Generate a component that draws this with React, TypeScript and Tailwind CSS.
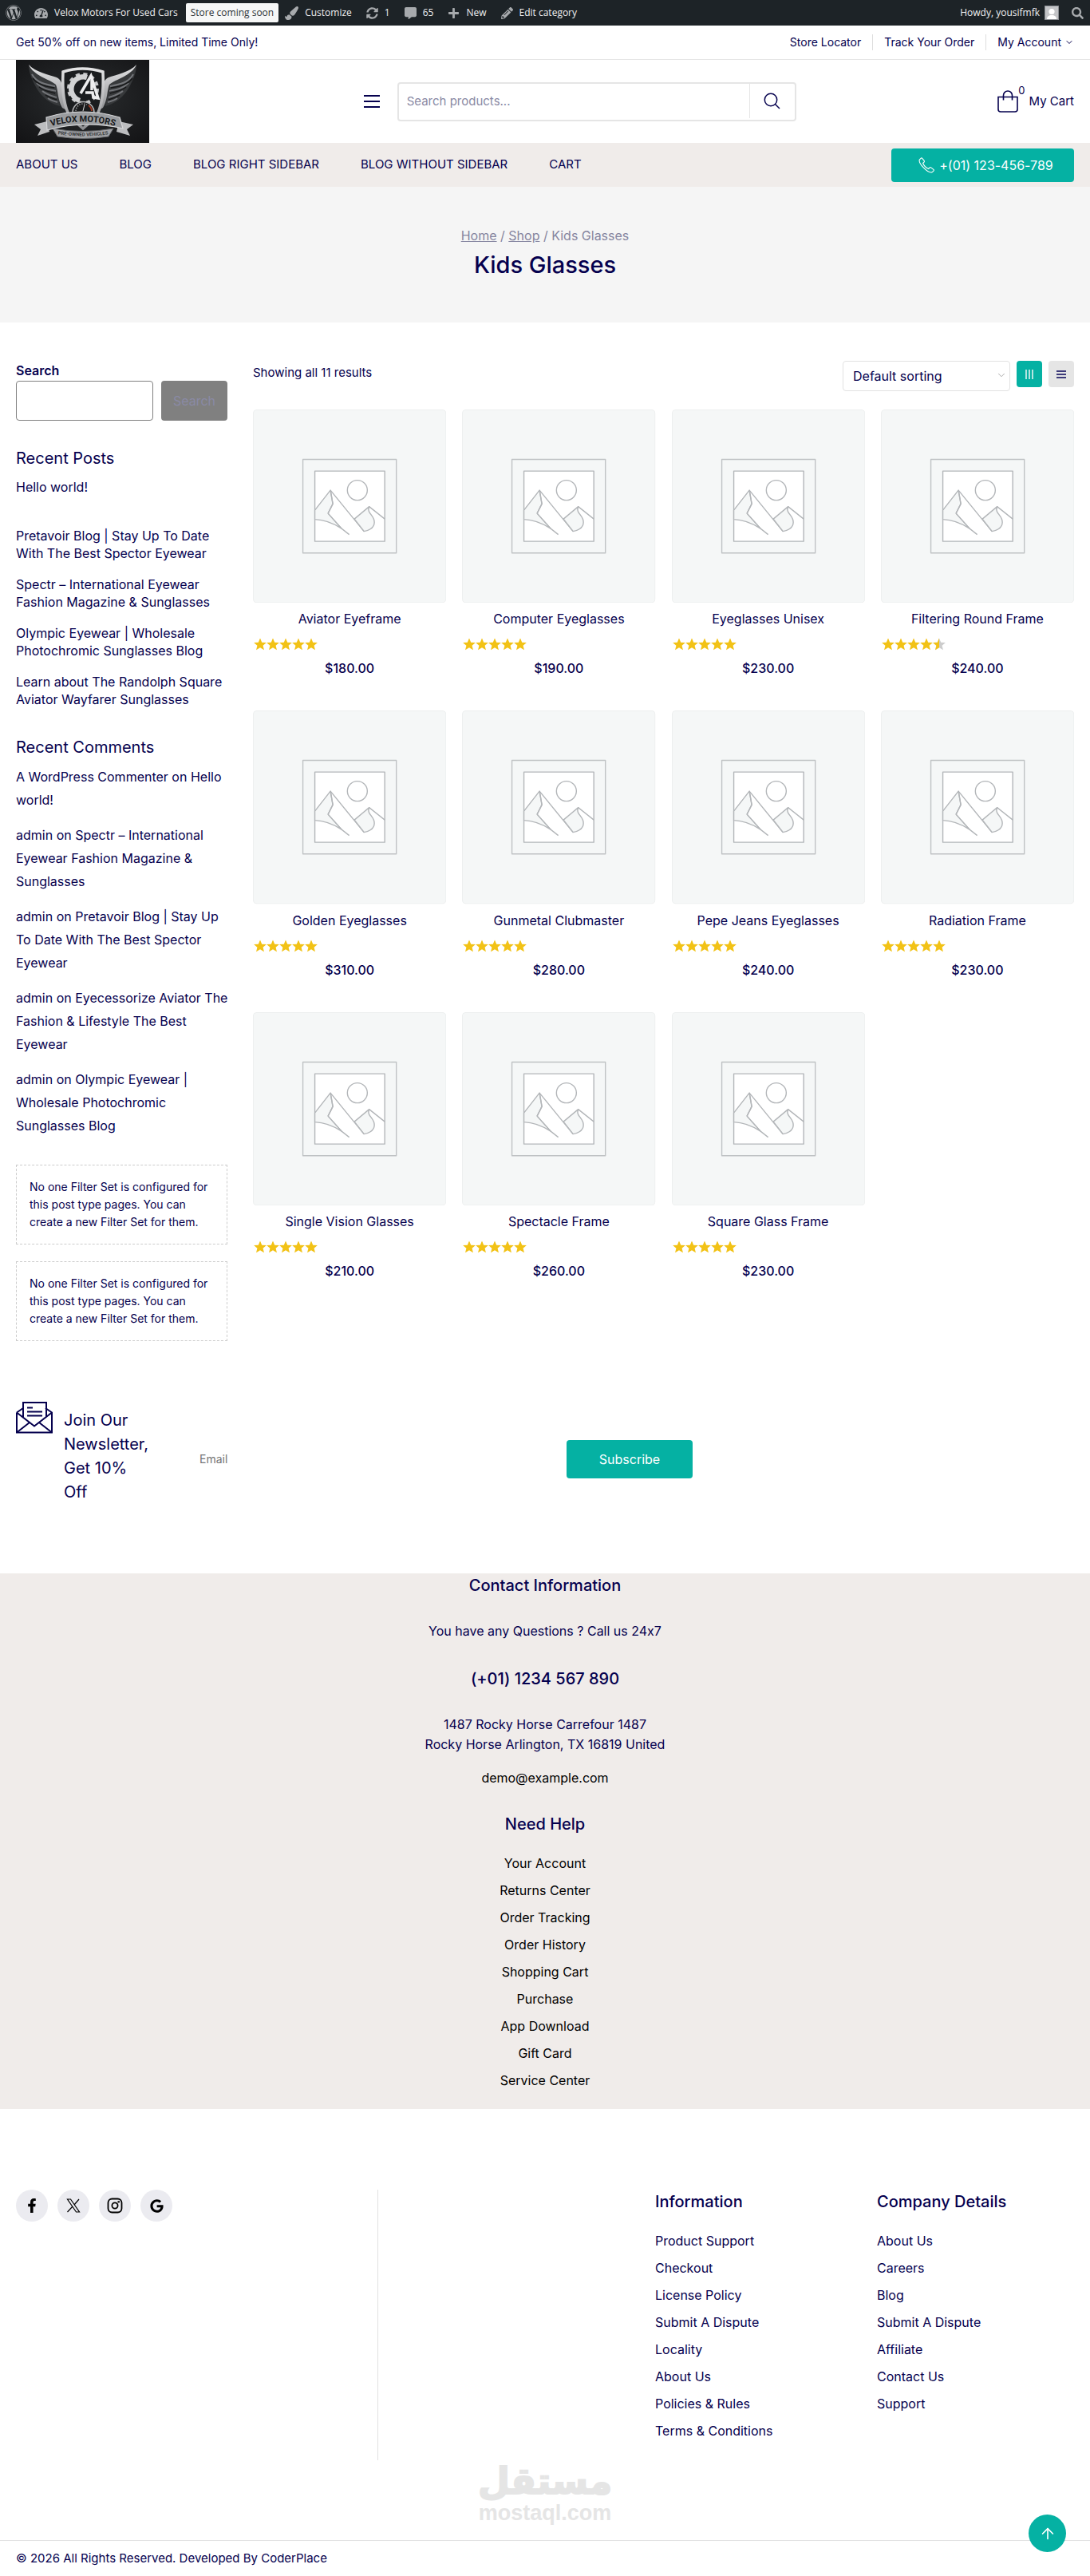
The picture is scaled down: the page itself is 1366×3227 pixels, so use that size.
import React from "react";
import { ArrowUp, ChevronDown } from "lucide-react";
import {
  FaCommentAlt,
  FaFacebookF,
  FaGoogle,
  FaPaintBrush,
  FaPencilAlt,
  FaPlus,
  FaSearch,
  FaSyncAlt,
  FaTachometerAlt,
  FaWordpress,
} from "react-icons/fa";

const bodyFont = "font-['Inter','Liberation_Sans',sans-serif] [font-feature-settings:'calt'_0]";
const adminFont = "font-['Open_Sans','Noto_Sans',sans-serif]";

type Product = { name: string; price: string; rating: number };

const products: Product[] = [
  { name: "Aviator Eyeframe", price: "$180.00", rating: 5 },
  { name: "Computer Eyeglasses", price: "$190.00", rating: 5 },
  { name: "Eyeglasses Unisex", price: "$230.00", rating: 5 },
  { name: "Filtering Round Frame", price: "$240.00", rating: 4.5 },
  { name: "Golden Eyeglasses", price: "$310.00", rating: 5 },
  { name: "Gunmetal Clubmaster", price: "$280.00", rating: 5 },
  { name: "Pepe Jeans Eyeglasses", price: "$240.00", rating: 5 },
  { name: "Radiation Frame", price: "$230.00", rating: 5 },
  { name: "Single Vision Glasses", price: "$210.00", rating: 5 },
  { name: "Spectacle Frame", price: "$260.00", rating: 5 },
  { name: "Square Glass Frame", price: "$230.00", rating: 5 },
];

const posts: string[][] = [
  ["Pretavoir Blog | Stay Up To Date", "With The Best Spector Eyewear"],
  ["Spectr – International Eyewear", "Fashion Magazine & Sunglasses"],
  ["Olympic Eyewear | Wholesale", "Photochromic Sunglasses Blog"],
  ["Learn about The Randolph Square", "Aviator Wayfarer Sunglasses"],
];

const comments: { author: string; lines: string[] }[] = [
  { author: "A WordPress Commenter", lines: ["Hello", "world!"] },
  { author: "admin", lines: ["Spectr – International", "Eyewear Fashion Magazine &", "Sunglasses"] },
  { author: "admin", lines: ["Pretavoir Blog | Stay Up", "To Date With The Best Spector", "Eyewear"] },
  { author: "admin", lines: ["Eyecessorize Aviator The", "Fashion & Lifestyle The Best", "Eyewear"] },
  { author: "admin", lines: ["Olympic Eyewear |", "Wholesale Photochromic", "Sunglasses Blog"] },
];

const helpLinks = [
  "Your Account",
  "Returns Center",
  "Order Tracking",
  "Order History",
  "Shopping Cart",
  "Purchase",
  "App Download",
  "Gift Card",
  "Service Center",
];

const infoLinks = [
  "Product Support",
  "Checkout",
  "License Policy",
  "Submit A Dispute",
  "Locality",
  "About Us",
  "Policies & Rules",
  "Terms & Conditions",
];

const companyLinks = ["About Us", "Careers", "Blog", "Submit A Dispute", "Affiliate", "Contact Us", "Support"];

function Lines({ lines }: { lines: string[] }) {
  return (
    <>
      {lines.map((line, i) => (
        <React.Fragment key={line}>
          {i > 0 && <br />}
          {line}
        </React.Fragment>
      ))}
    </>
  );
}

function AdminBar() {
  const icon = "shrink-0 text-[#a7aaad]";
  return (
    <div className={`flex h-8 items-center justify-between bg-[#1d2327] pl-[7px] pr-2 text-xs text-[#f0f0f1] ${adminFont}`}>
      <div className="flex items-center whitespace-nowrap">
        <a href="#wp" aria-label="About WordPress"><FaWordpress className={icon} size={20} /></a>
        <a href="#site" className="ml-4 flex items-center gap-2"><FaTachometerAlt className={icon} size={17} />Velox Motors For Used Cars</a>
        <a href="#soon" className="ml-[10px] rounded-xs bg-[#f6f7f7] px-[6px] py-[3px] leading-[18px] text-[#2c3338]">Store coming soon</a>
        <a href="#customize" className="ml-2 flex items-center gap-2"><FaPaintBrush className={icon} size={17} />Customize</a>
        <a href="#updates" className="ml-[18px] flex items-center gap-2"><FaSyncAlt className={icon} size={15} />1</a>
        <a href="#comments" className="ml-[18px] flex items-center gap-2"><FaCommentAlt className={icon} size={15} />65</a>
        <a href="#new" className="ml-[18px] flex items-center gap-2"><FaPlus className={icon} size={15} />New</a>
        <a href="#edit" className="ml-[18px] flex items-center gap-2"><FaPencilAlt className={icon} size={15} />Edit category</a>
      </div>
      <div className="flex items-center gap-4 whitespace-nowrap">
        <a href="#profile" className="flex items-center gap-[6px]">
          Howdy, yousifmfk
          <svg viewBox="0 0 18 18" className="h-[18px] w-[18px]" aria-hidden="true">
            <rect x="0.5" y="0.5" width="17" height="17" fill="#c3c4c7" stroke="#8c8f94" />
            <circle cx="9" cy="7.5" r="3.6" fill="#fff" />
            <path d="M3 17c0-3.500 2.500-5 6-5s6 1.500 6 5z" fill="#fff" />
          </svg>
        </a>
        <button type="button" aria-label="Search"><FaSearch className={icon} size={15} /></button>
      </div>
    </div>
  );
}

function TopBar() {
  return (
    <div className="flex h-[43px] items-center justify-between border-b border-[#e5e5e5] px-5 text-sm">
      <p>Get 50% off on new items, Limited Time Only!</p>
      <nav className="flex items-center" aria-label="Account">
        <a href="#stores" className="border-r border-[#dedede] pr-[14px] leading-5">Store Locator</a>
        <a href="#track" className="border-r border-[#dedede] px-[14px] leading-5">Track Your Order</a>
        <a href="#account" className="flex items-center gap-1 pl-[14px] leading-5">My Account<ChevronDown size={12} /></a>
      </nav>
    </div>
  );
}

function Logo() {
  return (
    <svg viewBox="0 0 167 104" className="h-[104px] w-[167px]" role="img" aria-label="Velox Motors">
      <defs>
        <linearGradient id="silver" x1="0" y1="0" x2="0" y2="1">
          <stop offset="0" stopColor="#e4e4e5" />
          <stop offset="1" stopColor="#8e8f92" />
        </linearGradient>
        <radialGradient id="plate" cx="0.5" cy="0.45" r="0.75">
          <stop offset="0" stopColor="#2b2e30" />
          <stop offset="1" stopColor="#121214" />
        </radialGradient>
        <g id="wing">
          <path d="M16 6C24 20 40 22 51 26L55 58C38 54 27 40 22 28 18 20 16 13 16 6z" fill="#37393b" />
          <path d="M16 6c8 9 26 13 35 16 5 2 7 8 8 14 1 10 1 18 6 28l-7-4C52 50 53 38 50 31 42 24 22 20 16 6z" fill="url(#silver)" />
          <path d="M20 18c6 11 18 13 29 15M26 29c7 7 15 8 24 10M33 39c6 5 12 6 18 8M40 48c4 3 8 4 12 5" fill="none" stroke="#74767a" strokeWidth="2" />
          <path d="M21 23c7 9 17 10 27 12M29 34c6 5 13 6 20 8M37 44c4 3 9 4 14 6" fill="none" stroke="#161718" strokeWidth="1.400" />
        </g>
      </defs>
      <rect width="167" height="104" fill="url(#plate)" />
      <use href="#wing" />
      <use href="#wing" transform="translate(167 0) scale(-1 1)" />
      <path d="M59 15q24-8 50 0c1 22 0 42-9 57L84 86 68 72C59 57 58 37 59 15z" fill="#1b1d1f" stroke="url(#silver)" strokeWidth="3.500" />
      <circle cx="84" cy="36" r="18" fill="none" stroke="#c7c8ca" strokeWidth="4" strokeDasharray="5 4.400" />
      <path d="M89 22a14.500 14.500 0 1 0-9 29" fill="none" stroke="#d2d3d4" strokeWidth="6.500" />
      <path d="M81 42l13-22 9 28-6-1-1-6h-9M95 25v13" fill="none" stroke="#ededee" strokeWidth="3.500" />
      <path d="M71 66a13.500 13.500 0 0 1 27 0z" fill="#1a1b1c" stroke="#b7b8ba" strokeWidth="1.500" />
      <path d="M75 64a9.500 9.500 0 0 1 14-8" fill="none" stroke="#8f9194" strokeWidth="1.500" strokeDasharray="1.500 1.500" />
      <path d="M91 57a9.500 9.500 0 0 1 4 7" fill="none" stroke="#a53a22" strokeWidth="1.800" />
      <path d="M84 64l2-8" stroke="#ddd" strokeWidth="1" />
      <path d="M23 81l16-4 3 13-15 5 4-8zM147 81l-18-4-3 13 17 5-4-8z" fill="#bcbdbf" />
      <path d="M46 86q38 7 76 0l-6 10q-32 5-64 0z" fill="#a4a5a8" stroke="#65676a" strokeWidth="1" />
      <path d="M38 72q45-14 92 0l4 14q-49-11-95 2z" fill="#9a9c9f" stroke="#d5d6d8" strokeWidth="1.200" />
      <path id="name-arc" d="M44 83q40-11 80 0" fill="none" />
      <path id="motto-arc" d="M50 93q34 5 68 0" fill="none" />
      <text className="font-['Roboto',sans-serif]" fontSize="11" fontWeight="700" fill="#18191b" textAnchor="middle">
        <textPath href="#name-arc" startOffset="50%">VELOX MOTORS</textPath>
      </text>
      <text className="font-['Roboto',sans-serif]" fontSize="6" fontWeight="700" fill="#35373a" textAnchor="middle">
        <textPath href="#motto-arc" startOffset="50%">PRE-OWNED VEHICLES</textPath>
      </text>
    </svg>
  );
}

function Header() {
  return (
    <header className="flex items-center px-5">
      <a href="#home"><Logo /></a>
      <div className="flex flex-1 items-center justify-center gap-[22px] pl-4">
        <button type="button" aria-label="Menu" className="flex w-5 flex-col gap-[5px]">
          <span className="h-[2px] bg-[#05004e]" />
          <span className="h-[2px] bg-[#05004e]" />
          <span className="h-[2px] bg-[#05004e]" />
        </button>
        <form className="flex h-[49px] w-[500px] rounded border-2 border-[#e5e5e5]" onSubmit={(e) => e.preventDefault()}>
          <input type="search" aria-label="Search products" placeholder="Search products..." className="min-w-0 flex-1 px-[10px] text-[15px] outline-none placeholder:text-[#8a8aa5]" />
          <button type="submit" aria-label="Search" className="mb-[2px] flex w-[57px] items-center justify-center border-l border-[#e5e5e5]">
            <svg viewBox="0 0 21 21" className="h-[21px] w-[21px]" fill="none" stroke="#05004e" strokeWidth="1.500" aria-hidden="true">
              <circle cx="9" cy="9" r="7.700" />
              <path d="M14.500 14.500l5.500 5.500" />
            </svg>
          </button>
        </form>
      </div>
      <a href="#cart" className="flex items-center text-[15px]">
        <svg viewBox="0 0 26 28" className="h-7 w-[26px]" fill="none" stroke="#05004e" strokeWidth="1.600" aria-hidden="true">
          <path d="M1 8.500h24V24q0 3-3 3H4q-3 0-3-3z" />
          <path d="M7.500 12.500V6.500a5.500 5.500 0 0 1 11 0v6" />
        </svg>
        <span className="mb-7 text-[13px] leading-none">0</span>
        <span className="ml-[5px]">My Cart</span>
      </a>
    </header>
  );
}

function NavBar() {
  return (
    <div className="flex h-[55px] items-center justify-between bg-[#f0ecea] px-5">
      <nav className="flex gap-[52px] text-[15px]" aria-label="Main">
        <a href="#about">ABOUT US</a>
        <a href="#blog">BLOG</a>
        <a href="#right">BLOG RIGHT SIDEBAR</a>
        <a href="#without">BLOG WITHOUT SIDEBAR</a>
        <a href="#cart">CART</a>
      </nav>
      <a href="tel:01123456789" className="flex h-[42px] w-[229px] items-center justify-center gap-[6px] rounded bg-[#05b1a3] pl-2 text-base text-white">
        <svg viewBox="0 0 20 20" className="h-5 w-5" fill="none" stroke="currentColor" strokeWidth="1.100" aria-hidden="true">
          <path d="M3 1.300 1.300 3C-.3 7.500 11.500 20.300 17 18.800l1.900-1.700q.9-.8 0-1.700l-3.200-2.500q-.9-.6-1.700.2l-1.400 1.400C9.900 13.400 6.700 10.200 5.600 7.500L7 6.100q.7-.8.2-1.700L4.700 1.300q-.8-.9-1.700 0z" />
        </svg>
        +(01) 123-456-789
      </a>
    </div>
  );
}

function PageTitle() {
  return (
    <section className="bg-[#f5f5f5] pb-[53px] pt-[49px] text-center">
      <nav aria-label="Breadcrumb" className="text-base leading-6 text-[#8585a0]">
        <a href="#home" className="underline">Home</a> / <a href="#shop" className="underline">Shop</a> / Kids Glasses
      </nav>
      <h1 className="mt-[5px] text-[29px] font-medium leading-[39px]">Kids Glasses</h1>
    </section>
  );
}

function Sidebar() {
  const notice = "No one Filter Set is configured for this post type pages. You can create a new Filter Set for them.";
  return (
    <aside className="w-[265px] shrink-0 text-base">
      <form onSubmit={(e) => e.preventDefault()}>
        <label htmlFor="side-search" className="block font-semibold leading-[25px]">Search</label>
        <div className="flex gap-[10px]">
          <input id="side-search" type="search" className="h-[50px] min-w-0 flex-1 rounded border border-[#808080] px-2" />
          <button type="submit" className="h-[50px] w-[83px] rounded bg-[#808080] text-[#8a8aa5]">Search</button>
        </div>
      </form>
      <h2 className="mt-8 text-xl leading-[30px]">Recent Posts</h2>
      <ul className="mt-[10px] flex flex-col gap-[17px] leading-[22px]">
        <li className="mb-[22px]"><a href="#hello">Hello world!</a></li>
        {posts.map((post) => (
          <li key={post[0]} className="whitespace-nowrap"><a href="#post"><Lines lines={post} /></a></li>
        ))}
      </ul>
      <h2 className="mt-[34px] text-xl leading-[30px]">Recent Comments</h2>
      <ul className="mt-2 flex flex-col gap-[15px] leading-[29px]">
        {comments.map((c) => (
          <li key={c.lines[0]} className="whitespace-nowrap">{c.author} on <a href="#comment"><Lines lines={c.lines} /></a></li>
        ))}
      </ul>
      <div className="mt-[34px] flex flex-col gap-[21px] text-sm leading-[22px]">
        <p className="border border-dashed border-[#cccccc] p-4">{notice}</p>
        <p className="border border-dashed border-[#cccccc] p-4">{notice}</p>
      </div>
    </aside>
  );
}

function Placeholder() {
  return (
    <svg viewBox="0 0 242 242" className="block w-full rounded" role="img" aria-label="Awaiting product image">
      <rect x="0.5" y="0.5" width="241" height="241" rx="4" fill="#f5f7f7" stroke="#edefef" />
      <g fill="none" stroke="#b3b6b9" strokeWidth="1.400" strokeLinejoin="round">
        <rect x="62.500" y="62.500" width="117" height="117" stroke="#bfc2c4" />
        <rect x="77.500" y="77" width="87.500" height="88" fill="#fff" />
        <circle cx="130.700" cy="101" r="12.500" />
        <path d="M77.500 126L97 101l3 17-6 12 17 19Q94 138 77.500 137.500z" fill="#f5f7f7" />
        <path d="M127 137l18.500-15.500C142 130 152 132 152 141 152 149 143 152 139 152.500z" fill="#f5f7f7" />
        <path d="M97 101l42 51.500M94 130l17 19 9.500 7.500M145.500 121.500L165 137M97 101l3 17-6 12" />
      </g>
    </svg>
  );
}

function Star({ fill }: { fill: number }) {
  const shape = "M8 .8l2.100 5 5.400.4-4.100 3.500 1.300 5.300L8 12.100 3.300 15l1.300-5.300L.5 6.200l5.400-.4z";
  return (
    <svg viewBox="0.4 0.4 15.200 15.200" className="h-4 w-4" aria-hidden="true">
      <path d={shape} fill={fill === 1 ? "#f2c216" : "#cccccc"} />
      {fill === 0.5 && <path d="M8 .8v11.300L3.300 15l1.300-5.300L.5 6.200l5.400-.4z" fill="#f2c216" />}
    </svg>
  );
}

function ProductCard({ name, price, rating }: Product) {
  return (
    <article>
      <a href="#product" className="block">
        <Placeholder />
        <h3 className="mt-2 text-center text-base leading-6">{name}</h3>
      </a>
      <div className="mt-3 flex pl-px" role="img" aria-label={`Rated ${rating} out of 5`}>
        {[1, 2, 3, 4, 5].map((n) => (
          <Star key={n} fill={rating >= n ? 1 : 0.5} />
        ))}
      </div>
      <p className="mt-[10px] text-center text-base font-medium leading-6">{price}</p>
    </article>
  );
}

function Shop() {
  return (
    <main className="flex gap-8 px-5 pt-12">
      <Sidebar />
      <div className="min-w-0 flex-1">
        <div className="flex h-[61px] items-start justify-between">
          <p className="pt-[3px] text-[15px] leading-6">Showing all 11 results</p>
          <div className="flex items-start gap-2">
            <div className="relative">
              <select aria-label="Shop order" className="h-[38px] w-[210px] appearance-none rounded border border-[#e2e2e2] bg-white pl-3 pr-8 text-base">
                <option>Default sorting</option>
                <option>Sort by popularity</option>
                <option>Sort by average rating</option>
              </select>
              <ChevronDown size={14} strokeWidth={1.5} className="pointer-events-none absolute right-1 top-[11px] text-[#a0a0a0]" />
            </div>
            <button type="button" aria-label="Grid view" className="flex h-[33px] w-8 items-center justify-center gap-[2px] rounded bg-[#05b1a3]">
              <span className="h-3 w-[2px] bg-[#b5e5e1]" />
              <span className="h-3 w-[2px] bg-[#b5e5e1]" />
              <span className="h-3 w-[2px] bg-[#b5e5e1]" />
            </button>
            <button type="button" aria-label="List view" className="flex h-[33px] w-8 flex-col items-center justify-center gap-[2px] rounded bg-[#e5e5e5]">
              <span className="h-[2px] w-3 bg-[#3d3a7a]" />
              <span className="h-[2px] w-3 bg-[#3d3a7a]" />
              <span className="h-[2px] w-3 bg-[#3d3a7a]" />
            </button>
          </div>
        </div>
        <div className="grid grid-cols-4 gap-x-5 gap-y-[41px]">
          {products.map((p) => (
            <ProductCard key={p.name} {...p} />
          ))}
        </div>
      </div>
    </main>
  );
}

function Newsletter() {
  return (
    <section className="flex px-5 pb-[87px] pt-[76px]">
      <svg viewBox="0 0 46 40" className="h-10 w-[46px] shrink-0" fill="none" stroke="#05004e" strokeWidth="2" aria-hidden="true">
        <path d="M1 13.500V38.500H45V13.500L37 8M1 13.500L9 8" />
        <path d="M1 13.500L23 30.500 45 13.500M1 38.500l16-12.500M45 38.500L29 26" />
        <path d="M9 19V1h29v18" />
        <path d="M14 7.500h7M14 12.500h19M14 17.500h19" />
      </svg>
      <p className="ml-[14px] mt-2 w-[130px] text-xl leading-[30px]">
        Join Our<br />Newsletter,<br />Get 10%<br />Off
      </p>
      <form className="mt-12 flex h-12 w-[658px]" onSubmit={(e) => e.preventDefault()}>
        <input type="email" aria-label="Email" placeholder="Email" className="min-w-0 flex-1 px-10 text-sm outline-none placeholder:text-[#757575]" />
        <button type="submit" className="w-[158px] rounded bg-[#05b1a3] text-base text-white">Subscribe</button>
      </form>
    </section>
  );
}

function Contact() {
  return (
    <section className="bg-[#f0ecea] pb-6 text-center text-base">
      <h2 className="text-xl font-medium leading-[30px]">Contact Information</h2>
      <p className="mt-[30px] leading-[25px]">You have any Questions ? Call us 24x7</p>
      <p className="mt-8 text-xl font-medium leading-[30px]">(+01) 1234 567 890</p>
      <p className="mt-[30px] leading-[25px]">1487 Rocky Horse Carrefour 1487<br />Rocky Horse Arlington, TX 16819 United</p>
      <p className="mt-[17px] leading-[25px] text-black"><a href="mailto:demo@example.com">demo@example.com</a></p>
      <h2 className="mt-[30px] text-xl font-medium leading-[30px]">Need Help</h2>
      <ul className="mt-[22px] flex flex-col gap-[10px] leading-6 text-black">
        {helpLinks.map((l) => (
          <li key={l}><a href="#help">{l}</a></li>
        ))}
      </ul>
    </section>
  );
}

function FooterLinks({ title, links }: { title: string; links: string[] }) {
  return (
    <div className="text-base">
      <h2 className="text-xl font-medium leading-[30px]">{title}</h2>
      <ul className="mt-[22px] flex flex-col gap-[10px] leading-6">
        {links.map((l) => (
          <li key={l}><a href="#info">{l}</a></li>
        ))}
      </ul>
    </div>
  );
}

function Footer() {
  const round = "flex h-10 w-10 items-center justify-center rounded-full bg-[#ebebf0] text-black";
  return (
    <footer className="relative pt-[101px]">
      <div className="flex px-5">
        <div className="flex h-[339px] w-[454px] gap-3 border-r border-[#e2e2e2]">
          <a href="#facebook" aria-label="Facebook" className={round}><FaFacebookF size={18} /></a>
          <a href="#x" aria-label="X" className={round}>
            <svg viewBox="0 0 18 18" className="h-[18px] w-[18px]" fill="none" stroke="currentColor" strokeWidth="1.200" aria-hidden="true">
              <path d="M1.500 1h4L16.500 17h-4zM16 1L10 8M1.500 17L8 10" />
            </svg>
          </a>
          <a href="#instagram" aria-label="Instagram" className={round}>
            <svg viewBox="0 0 20 20" className="h-5 w-5" fill="none" stroke="currentColor" strokeWidth="1.800" aria-hidden="true">
              <rect x="1.500" y="1.500" width="17" height="17" rx="5" />
              <circle cx="10" cy="10" r="3.600" />
              <circle cx="14.700" cy="5.300" r="0.500" />
            </svg>
          </a>
          <a href="#google" aria-label="Google" className={round}><FaGoogle size={17} /></a>
        </div>
        <div className="ml-auto grid grid-cols-[278px_247px]">
          <FooterLinks title="Information" links={infoLinks} />
          <FooterLinks title="Company Details" links={companyLinks} />
        </div>
      </div>
      <div className="flex h-[100px] flex-col items-center font-bold text-[#e5e5e5]">
        <span lang="ar" dir="rtl" className="font-['DejaVu_Sans',sans-serif] text-[46px] leading-[52px] [-webkit-text-stroke:2px_#e5e5e5]">مستقل</span>
        <span className="font-['Liberation_Sans',sans-serif] text-[27px] leading-7">mostaql.com</span>
      </div>
      <p className="border-t border-[#e2e2e2] px-5 pb-[10px] pt-[9px] text-[15px] leading-[25px]">
        © 2026 All Rights Reserved. Developed By CoderPlace
      </p>
      <a href="#top" aria-label="Back to top" className="absolute bottom-[30px] right-[30px] flex h-[47px] w-[47px] items-center justify-center rounded-full bg-[#05b1a3] text-white">
        <ArrowUp size={22} strokeWidth={1.800} />
      </a>
    </footer>
  );
}

export default function App() {
  return (
    <div id="top" className={`bg-white text-[#05004e] ${bodyFont}`}>
      <AdminBar />
      <TopBar />
      <Header />
      <NavBar />
      <PageTitle />
      <Shop />
      <Newsletter />
      <Contact />
      <Footer />
    </div>
  );
}
